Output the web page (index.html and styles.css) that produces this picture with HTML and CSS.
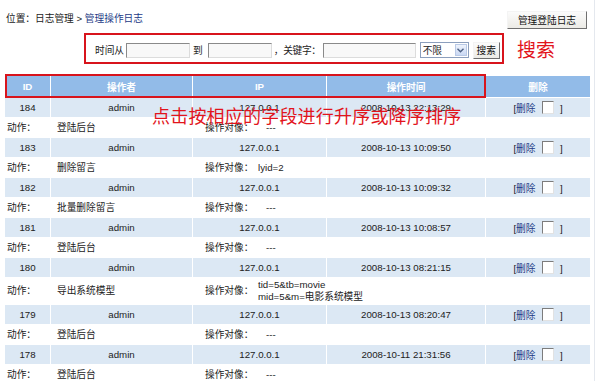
FILE: index.html
```html
<!DOCTYPE html>
<html lang="zh-CN">
<head>
    <meta charset="UTF-8">
    <meta name="viewport" content="width=device-width, initial-scale=1.0">
    <title>管理操作日志</title>
    <link rel="stylesheet" href="styles.css">
</head>
<body>
    <div class="page">
        <div class="topbar">
            <div class="crumb">位置：日志管理 &gt; <a href="#">管理操作日志</a></div>
            <button class="btn btn-top">管理登陆日志</button>
        </div>

        <div class="search-line">
            <form class="search">
                <label>时间从</label>
                <input type="text" class="txt txt-date">
                <label class="to">到</label>
                <input type="text" class="txt txt-date">
                <label class="kw">，关键字：</label>
                <input type="text" class="txt txt-key">
                <span class="fake-select">
                    <span class="fake-select-value">不限</span>
                    <span class="fake-select-arrow">
                        <svg width="7" height="5" viewBox="0 0 7 5"><path d="M0.5 0.8 L3.5 3.8 L6.5 0.8" fill="none" stroke="#4d6185" stroke-width="1.4"/></svg>
                    </span>
                </span>
                <button type="button" class="btn btn-search">搜索</button>
            </form>
            <span class="note note-search">搜索</span>
        </div>

        <div class="list">
            <table class="log">
                <colgroup>
                    <col class="c-id">
                    <col class="c-user">
                    <col class="c-ip">
                    <col class="c-time">
                    <col class="c-del">
                </colgroup>
                <thead>
                    <tr>
                        <th>ID</th>
                        <th>操作者</th>
                        <th>IP</th>
                        <th>操作时间</th>
                        <th>删除</th>
                    </tr>
                </thead>
                <tbody>
                    <tr class="row">
                        <td>184</td><td>admin</td><td>127.0.0.1</td><td>2008-10-13 22:13:29</td>
                        <td>[<a href="#">删除</a> <span class="chk"></span> ]</td>
                    </tr>
                    <tr class="act">
                        <td colspan="5"><div class="act-grid"><span>动作：</span><span>登陆后台</span><span>操作对像：</span><span class="dash">---</span></div></td>
                    </tr>
                    <tr class="row">
                        <td>183</td><td>admin</td><td>127.0.0.1</td><td>2008-10-13 10:09:50</td>
                        <td>[<a href="#">删除</a> <span class="chk"></span> ]</td>
                    </tr>
                    <tr class="act">
                        <td colspan="5"><div class="act-grid"><span>动作：</span><span>删除留言</span><span>操作对像：</span><span>lyid=2</span></div></td>
                    </tr>
                    <tr class="row">
                        <td>182</td><td>admin</td><td>127.0.0.1</td><td>2008-10-13 10:09:32</td>
                        <td>[<a href="#">删除</a> <span class="chk"></span> ]</td>
                    </tr>
                    <tr class="act">
                        <td colspan="5"><div class="act-grid"><span>动作：</span><span>批量删除留言</span><span>操作对像：</span><span class="dash">---</span></div></td>
                    </tr>
                    <tr class="row">
                        <td>181</td><td>admin</td><td>127.0.0.1</td><td>2008-10-13 10:08:57</td>
                        <td>[<a href="#">删除</a> <span class="chk"></span> ]</td>
                    </tr>
                    <tr class="act">
                        <td colspan="5"><div class="act-grid"><span>动作：</span><span>登陆后台</span><span>操作对像：</span><span class="dash">---</span></div></td>
                    </tr>
                    <tr class="row">
                        <td>180</td><td>admin</td><td>127.0.0.1</td><td>2008-10-13 08:21:15</td>
                        <td>[<a href="#">删除</a> <span class="chk"></span> ]</td>
                    </tr>
                    <tr class="act act-tall">
                        <td colspan="5"><div class="act-grid"><span>动作：</span><span>导出系统模型</span><span>操作对像：</span><span>tid=5&amp;tb=movie<br>mid=5&amp;m=电影系统模型</span></div></td>
                    </tr>
                    <tr class="row">
                        <td>179</td><td>admin</td><td>127.0.0.1</td><td>2008-10-13 08:20:47</td>
                        <td>[<a href="#">删除</a> <span class="chk"></span> ]</td>
                    </tr>
                    <tr class="act">
                        <td colspan="5"><div class="act-grid"><span>动作：</span><span>登陆后台</span><span>操作对像：</span><span class="dash">---</span></div></td>
                    </tr>
                    <tr class="row">
                        <td>178</td><td>admin</td><td>127.0.0.1</td><td>2008-10-11 21:31:56</td>
                        <td>[<a href="#">删除</a> <span class="chk"></span> ]</td>
                    </tr>
                    <tr class="act">
                        <td colspan="5"><div class="act-grid"><span>动作：</span><span>登陆后台</span><span>操作对像：</span><span class="dash">---</span></div></td>
                    </tr>
                </tbody>
            </table>

            <!-- annotation overlays -->
            <div class="hl-head"></div>
            <div class="note note-sort">点击按相应的字段进行升序或降序排序</div>
        </div>
    </div>
</body>
</html>
```

FILE: styles.css
```css
body {
    margin: 0;
    background: #fff;
    font-family: "Liberation Sans", "Noto Sans CJK SC", sans-serif;
    font-size: 9.7px;
    color: #222;
}
.page {
    width: 594px;
    height: 381px;
    overflow: hidden;
    border-right: 1px solid #e4e8ee;
}
a {
    color: #1d3b86;
    text-decoration: none;
}
.topbar {
    display: flex;
    justify-content: space-between;
    align-items: flex-start;
    height: 33px;
    box-sizing: border-box;
    padding: 11px 7px 0 6px;
}
.crumb {
    margin-top: 2px;
    line-height: 12px;
}
.btn {
    font-family: "Liberation Sans", "Noto Sans CJK SC", sans-serif;
    font-size: 9.7px;
    color: #111;
    background: linear-gradient(#fbfbfb, #ecebe6);
    border: 1px solid;
    border-color: #f4f4f4 #6f6f6f #6f6f6f #f4f4f4;
    padding: 0;
    cursor: pointer;
}
.btn-top {
    width: 80px;
    height: 18px;
}
.search-line {
    display: flex;
    align-items: center;
}
.search {
    display: flex;
    align-items: center;
    width: 420px;
    height: 31px;
    box-sizing: border-box;
    margin-left: 84px;
    padding: 3px 0 0 9px;
    border: 2px solid #d8141c;
}
.search > * {
    flex-shrink: 0;
}
.search label {
    margin-right: 2px;
    white-space: nowrap;
}
.search .to {
    margin: 0 5px 0 3px;
}
.search .kw {
    margin: 0 2px 0 2px;
    letter-spacing: -0.3px;
}
.txt {
    height: 15px;
    box-sizing: border-box;
    border: 1px solid;
    border-color: #8a8a8a #dcdcdc #dcdcdc #8a8a8a;
    background: #f8f8f8;
    padding: 0;
}
.txt-date {
    width: 64px;
}
.txt-key {
    width: 93px;
}
.fake-select {
    display: flex;
    align-items: center;
    width: 49px;
    height: 16px;
    box-sizing: border-box;
    margin-left: 4px;
    border: 1px solid #8c9fbd;
    background: #fff;
}
.fake-select-value {
    flex: 1;
    padding-left: 2px;
}
.fake-select-arrow {
    display: flex;
    align-items: center;
    justify-content: center;
    width: 12px;
    height: 12px;
    margin-right: 1px;
    border: 1px solid #b9c9e6;
    background: linear-gradient(#eef3fc, #c9d8f3);
    box-sizing: border-box;
}
.btn-search {
    width: 27px;
    height: 17px;
    margin-left: 4px;
}
.note {
    font-family: "Noto Sans CJK SC", sans-serif;
    color: #e2141c;
}
.note-search {
    margin-left: 13px;
    font-size: 19px;
    line-height: 20px;
}
.list {
    position: relative;
    margin-top: 11px;
}
.log {
    table-layout: fixed;
    width: 587px;
    margin-left: 4px;
    border-collapse: separate;
    border-spacing: 1px;
}
.c-id { width: 45px; }
.c-user { width: 141px; }
.c-ip { width: 133px; }
.c-time { width: 158px; }
.c-del { width: 104px; }
.log th {
    height: 21px;
    padding: 0;
    background: #92bbe8;
    color: #fff;
    font-weight: bold;
    text-align: center;
}
.row td {
    height: 19px;
    padding: 0;
    background: #dce8f4;
    text-align: center;
    white-space: nowrap;
}
.act td {
    height: 19px;
    padding: 0 2px;
    background: #fff;
}
.act-tall td {
    height: 26px;
}
.act-grid {
    display: grid;
    grid-template-columns: 50px 148px 53px 1fr;
    align-items: center;
    line-height: 12px;
}
.dash {
    padding-left: 8px;
}
.chk {
    display: inline-block;
    width: 10px;
    height: 11px;
    margin: 0 3px 0 4px;
    vertical-align: -2px;
    background: #fff;
    border: 1px solid;
    border-color: #7c7c7c #e2e2e2 #e2e2e2 #7c7c7c;
}
.hl-head {
    position: absolute;
    left: 5px;
    top: -1px;
    width: 481px;
    height: 24px;
    box-sizing: border-box;
    border: 2px solid #d8141c;
}
.note-sort {
    position: absolute;
    left: 152px;
    top: 31px;
    font-size: 18px;
    line-height: 18px;
    letter-spacing: 0.2px;
    white-space: nowrap;
}
```
